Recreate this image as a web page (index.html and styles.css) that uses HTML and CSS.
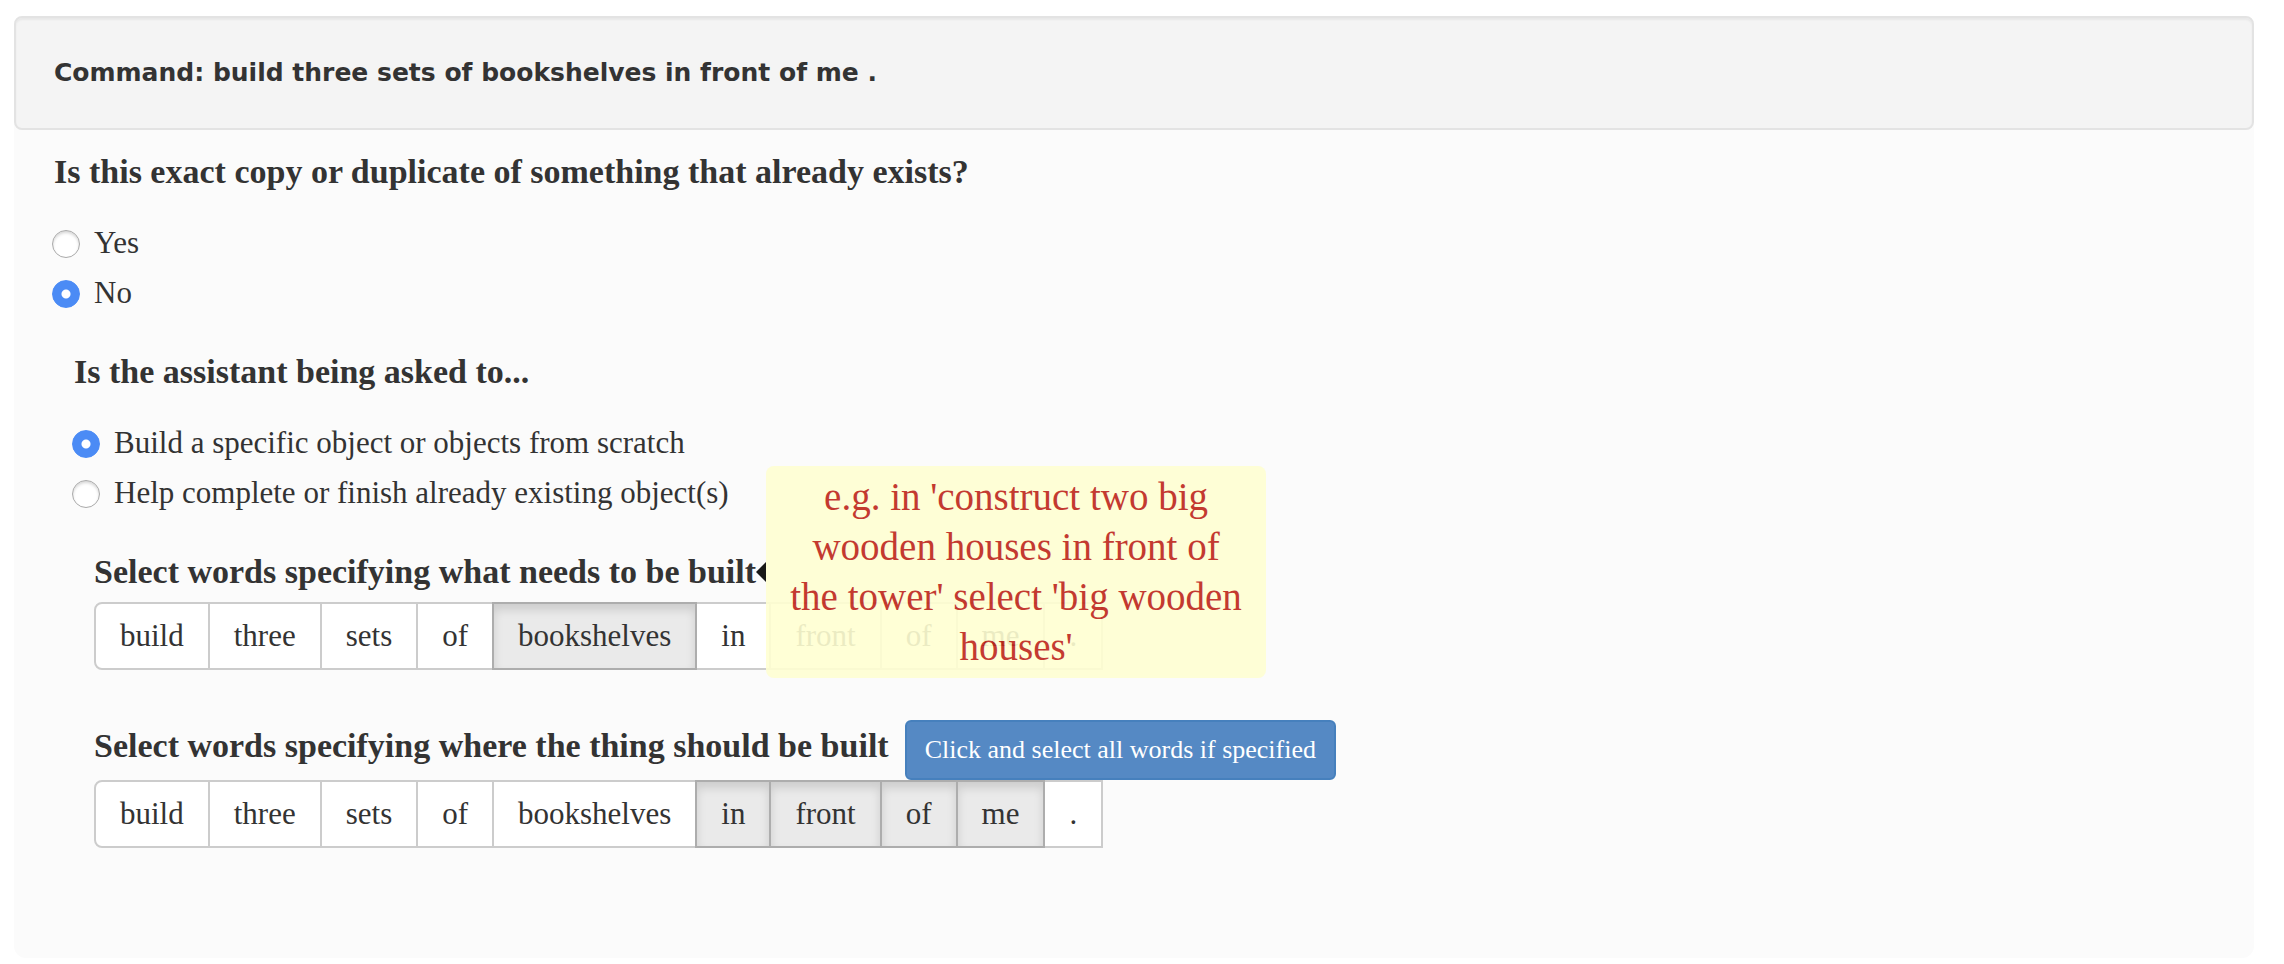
FILE: index.html
```html
<!DOCTYPE html>
<html lang="en">
<head>
<meta charset="utf-8">
<title>Command annotation</title>
<link rel="stylesheet" href="styles.css">
</head>
<body>
<main class="panel">
  <header class="well"><h1 class="command">Command: build three sets of bookshelves in front of me .</h1></header>
  <form class="questions">
    <fieldset class="question">
      <legend class="prompt">Is this exact copy or duplicate of something that already exists?</legend>
      <label class="option"><input class="radio" type="radio" name="copy" value="yes"><span>Yes</span></label>
      <label class="option"><input class="radio" type="radio" name="copy" value="no" checked><span>No</span></label>
    </fieldset>
    <fieldset class="question question-nested">
      <legend class="prompt">Is the assistant being asked to...</legend>
      <label class="option"><input class="radio" type="radio" name="action" value="build" checked><span>Build a specific object or objects from scratch</span></label>
      <label class="option"><input class="radio" type="radio" name="action" value="finish"><span>Help complete or finish already existing object(s)</span></label>
    </fieldset>
    <section class="selection">
      <div class="selection-head">
        <h2 class="prompt">Select words specifying what needs to be built</h2>
        <div class="tooltip" role="tooltip">e.g. in 'construct two big wooden houses in front of the tower' select 'big wooden houses'</div>
      </div>
      <div class="words">
        <button type="button" class="word">build</button>
        <button type="button" class="word">three</button>
        <button type="button" class="word">sets</button>
        <button type="button" class="word">of</button>
        <button type="button" class="word active">bookshelves</button>
        <button type="button" class="word">in</button>
        <button type="button" class="word">front</button>
        <button type="button" class="word">of</button>
        <button type="button" class="word">me</button>
        <button type="button" class="word">.</button>
      </div>
    </section>
    <section class="selection selection-where">
      <div class="selection-head">
        <h2 class="prompt">Select words specifying where the thing should be built</h2>
        <button type="button" class="select-all">Click and select all words if specified</button>
      </div>
      <div class="words">
        <button type="button" class="word">build</button>
        <button type="button" class="word">three</button>
        <button type="button" class="word">sets</button>
        <button type="button" class="word">of</button>
        <button type="button" class="word">bookshelves</button>
        <button type="button" class="word active">in</button>
        <button type="button" class="word active">front</button>
        <button type="button" class="word active">of</button>
        <button type="button" class="word active">me</button>
        <button type="button" class="word">.</button>
      </div>
    </section>
  </form>
</main>
</body>
</html>
```
FILE: styles.css
```css
* { box-sizing: border-box; }
body {
  margin: 16px 30px 6px 14px;
  background: #fff;
  color: #333;
  font-family: "Liberation Serif", serif;
  font-size: 31px;
}
.panel { background: #fbfbfb; border-radius: 12px; }
.well {
  padding: 36px 38px;
  border: 2px solid #e3e3e3;
  border-radius: 8px;
  background: #f4f4f4;
  box-shadow: inset 0 2px 2px rgba(0, 0, 0, .05);
}
.command {
  margin: 0;
  font: bold 25px/38px "DejaVu Sans", sans-serif;
}
.questions { padding: 22px 40px 110px; }
.question { margin: 0; padding: 0; border: 0; min-width: 0; }
.question-nested { margin: 34px 0 0 20px; }
.prompt {
  margin: 0;
  padding: 0;
  font-size: 34px;
  line-height: 40px;
  font-weight: bold;
}
.question .prompt { margin-bottom: 26px; }
.option {
  display: flex;
  align-items: center;
  gap: 14px;
  width: fit-content;
  margin-left: -2px;
  line-height: 50px;
}
.radio {
  appearance: none;
  width: 28px;
  height: 28px;
  margin: 2px 0 0;
  border: 1px solid #aaa;
  border-radius: 50%;
  background: #fff;
  box-shadow: inset 0 2px 3px rgba(0, 0, 0, .16);
}
.radio:checked {
  border-color: #4b8bf5;
  background: radial-gradient(circle, #fff 0 4px, #4b8bf5 5px);
  box-shadow: none;
}
.selection { margin: 28px 0 0 40px; }
.selection-where { margin-top: 50px; }
.selection-head {
  position: relative;
  display: flex;
  align-items: flex-start;
  gap: 16px;
  width: fit-content;
  min-height: 56px;
}
.selection-head .prompt { padding-top: 6px; }
.words { display: flex; }
.word {
  height: 68px;
  padding: 0 24px;
  border: 2px solid #ccc;
  background: #fff;
  color: #333;
  font: 31px/40px "Liberation Serif", serif;
}
.word + .word { margin-left: -2px; }
.word:first-child { border-radius: 8px 0 0 8px; }
.word.active {
  position: relative;
  border-color: #adadad;
  background: #eaeaea;
  box-shadow: inset 0 6px 10px rgba(0, 0, 0, .125);
}
.select-all {
  height: 60px;
  padding: 0 18px;
  border: 2px solid #4680bd;
  border-radius: 6px;
  background: #5589c4;
  color: #fff;
  font: 26px/36px "Liberation Serif", serif;
}
.tooltip {
  position: absolute;
  z-index: 2;
  left: calc(100% + 10px);
  top: 26px;
  transform: translateY(-50%);
  width: 500px;
  padding: 6px 20px;
  border-radius: 8px;
  background: #ffffd2;
  color: #be261a;
  font-size: 39px;
  line-height: 50px;
  text-align: center;
  opacity: .9;
}
.tooltip::before {
  content: "";
  position: absolute;
  right: 100%;
  top: 50%;
  border: 10px solid transparent;
  border-left-width: 0;
  border-right-color: #000;
  transform: translateY(-50%);
}
```
